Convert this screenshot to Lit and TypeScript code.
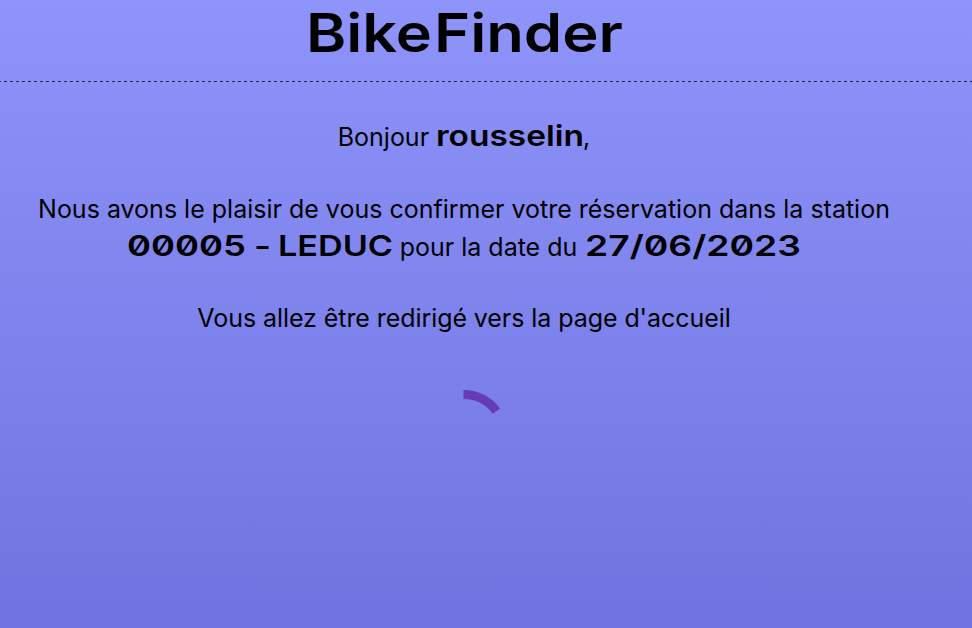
import { LitElement, html, svg, css } from "lit";
import { customElement, property } from "lit/decorators.js";

interface Word {
  text: string;
  x: number;
  width: number;
}

/** Wide display lettering; each word is fitted to its own measure. */
@customElement("display-text")
class DisplayText extends LitElement {
  @property({ attribute: false }) words: Word[] = [];
  @property({ type: Number }) width = 0;
  @property({ type: Number }) height = 22;

  static styles = css`
    :host {
      display: inline;
    }
    svg {
      display: inline-block;
      overflow: visible;
      vertical-align: baseline;
    }
    text {
      font-family: Inter, "DejaVu Sans", sans-serif;
      font-weight: 600;
      font-feature-settings: "zero" 1;
      letter-spacing: 0;
      fill: #000;
    }
  `;

  render() {
    return html`<svg width=${this.width} height=${this.height}>
      ${this.words.map(
        (w) => svg`<text x=${w.x} y=${this.height} font-size=${this.height / 0.727}
          textLength=${w.width} lengthAdjust="spacingAndGlyphs">${w.text}</text>`
      )}
    </svg>`;
  }
}

@customElement("app-root")
class AppRoot extends LitElement {
  static styles = css`
    :host {
      display: block;
      height: 628px;
      overflow: hidden;
      color: #000;
      font: 400 25px/38px Inter, sans-serif;
      background: linear-gradient(#8f94fb, #6e73df);
    }
    header {
      box-sizing: border-box;
      height: 81px;
      padding: 13px 44px 0 0;
      text-align: center;
      line-height: 0;
    }
    .rule {
      height: 1px;
      background: linear-gradient(
          90deg,
          rgba(0, 0, 0, 0.6) 0 1px,
          #000 1px 2px,
          rgba(0, 0, 0, 0.6) 2px 3px,
          transparent 3px
        )
        4px 0 / 6px 1px repeat-x;
    }
    main {
      padding: 36px 44px 0 0;
      text-align: center;
    }
    p {
      margin: 0 0 34px;
      white-space: nowrap;
    }
    .details {
      margin-bottom: 33px;
    }
    .redirect {
      letter-spacing: -0.07px;
    }
    .spinner {
      display: block;
      width: 90px;
      height: 90px;
      margin: 53px auto 0;
    }
    .spinner path {
      fill: none;
      stroke: #673ab7;
      stroke-width: 9;
    }
  `;

  render() {
    return html`
      <header>
        <display-text .width=${315} .height=${39}
          .words=${[
            { text: "Bike", x: -1, width: 126 },
            { text: "Finder", x: 127, width: 189 },
          ]}></display-text>
      </header>
      <div class="rule"></div>
      <main>
        <p>Bonjour <display-text .width=${147} .height=${21}
          .words=${[{ text: "rousselin", x: 0, width: 148 }]}></display-text>,</p>
        <p class="details">Nous avons le plaisir de vous confirmer votre réservation dans la station<br>
          <display-text .width=${265} .height=${21}
            .words=${[
              { text: "00005", x: -1, width: 119 },
              { text: "-", x: 126, width: 17 },
              { text: "LEDUC", x: 150, width: 115 },
            ]}></display-text>
          pour la date du
          <display-text .width=${216} .height=${21}
            .words=${[{ text: "27/06/2023", x: 1, width: 216 }]}></display-text></p>
        <p class="redirect">Vous allez être redirigé vers la page d'accueil</p>
        <svg class="spinner" viewBox="0 0 90 90">
          <path d="M44.5 4.5A40.5 40.5 0 0 1 77.4 21.2"></path>
        </svg>
      </main>
    `;
  }
}
